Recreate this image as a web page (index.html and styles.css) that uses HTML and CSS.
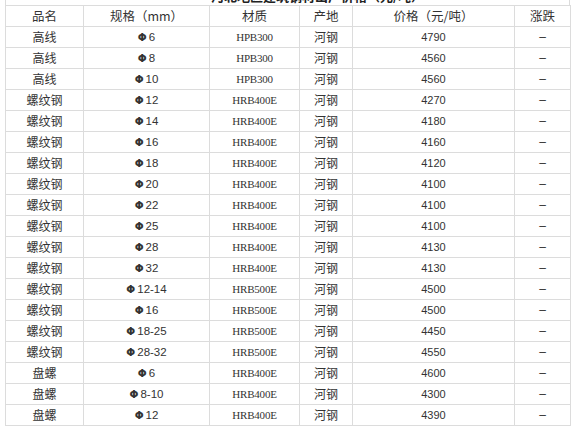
FILE: index.html
```html
<!DOCTYPE html>
<html lang="zh-CN">
<head>
<meta charset="utf-8">
<title>钢材价格</title>
<link rel="stylesheet" href="styles.css">
</head>
<body>
<div class="sheet">
  <div class="title-strip"><span class="title">河北地区建筑钢材出厂价格（元/吨）</span></div>
  <table class="prices">
    <colgroup>
      <col class="c-name"><col class="c-spec"><col class="c-mat"><col class="c-orig"><col class="c-price"><col class="c-chg">
    </colgroup>
    <thead>
      <tr><th>品名</th><th>规格（mm）</th><th>材质</th><th>产地</th><th>价格（元/吨）</th><th>涨跌</th></tr>
    </thead>
    <tbody>
      <tr><td>高线</td><td class="spec"><span class="phi">Φ</span>6</td><td class="mat">HPB300</td><td>河钢</td><td class="num">4790</td><td class="chg">–</td></tr>
      <tr><td>高线</td><td class="spec"><span class="phi">Φ</span>8</td><td class="mat">HPB300</td><td>河钢</td><td class="num">4560</td><td class="chg">–</td></tr>
      <tr><td>高线</td><td class="spec"><span class="phi">Φ</span>10</td><td class="mat">HPB300</td><td>河钢</td><td class="num">4560</td><td class="chg">–</td></tr>
      <tr><td>螺纹钢</td><td class="spec"><span class="phi">Φ</span>12</td><td class="mat">HRB400E</td><td>河钢</td><td class="num">4270</td><td class="chg">–</td></tr>
      <tr><td>螺纹钢</td><td class="spec"><span class="phi">Φ</span>14</td><td class="mat">HRB400E</td><td>河钢</td><td class="num">4180</td><td class="chg">–</td></tr>
      <tr><td>螺纹钢</td><td class="spec"><span class="phi">Φ</span>16</td><td class="mat">HRB400E</td><td>河钢</td><td class="num">4160</td><td class="chg">–</td></tr>
      <tr><td>螺纹钢</td><td class="spec"><span class="phi">Φ</span>18</td><td class="mat">HRB400E</td><td>河钢</td><td class="num">4120</td><td class="chg">–</td></tr>
      <tr><td>螺纹钢</td><td class="spec"><span class="phi">Φ</span>20</td><td class="mat">HRB400E</td><td>河钢</td><td class="num">4100</td><td class="chg">–</td></tr>
      <tr><td>螺纹钢</td><td class="spec"><span class="phi">Φ</span>22</td><td class="mat">HRB400E</td><td>河钢</td><td class="num">4100</td><td class="chg">–</td></tr>
      <tr><td>螺纹钢</td><td class="spec"><span class="phi">Φ</span>25</td><td class="mat">HRB400E</td><td>河钢</td><td class="num">4100</td><td class="chg">–</td></tr>
      <tr><td>螺纹钢</td><td class="spec"><span class="phi">Φ</span>28</td><td class="mat">HRB400E</td><td>河钢</td><td class="num">4130</td><td class="chg">–</td></tr>
      <tr><td>螺纹钢</td><td class="spec"><span class="phi">Φ</span>32</td><td class="mat">HRB400E</td><td>河钢</td><td class="num">4130</td><td class="chg">–</td></tr>
      <tr><td>螺纹钢</td><td class="spec"><span class="phi">Φ</span>12-14</td><td class="mat">HRB500E</td><td>河钢</td><td class="num">4500</td><td class="chg">–</td></tr>
      <tr><td>螺纹钢</td><td class="spec"><span class="phi">Φ</span>16</td><td class="mat">HRB500E</td><td>河钢</td><td class="num">4500</td><td class="chg">–</td></tr>
      <tr><td>螺纹钢</td><td class="spec"><span class="phi">Φ</span>18-25</td><td class="mat">HRB500E</td><td>河钢</td><td class="num">4450</td><td class="chg">–</td></tr>
      <tr><td>螺纹钢</td><td class="spec"><span class="phi">Φ</span>28-32</td><td class="mat">HRB500E</td><td>河钢</td><td class="num">4550</td><td class="chg">–</td></tr>
      <tr><td>盘螺</td><td class="spec"><span class="phi">Φ</span>6</td><td class="mat">HRB400E</td><td>河钢</td><td class="num">4600</td><td class="chg">–</td></tr>
      <tr><td>盘螺</td><td class="spec"><span class="phi">Φ</span>8-10</td><td class="mat">HRB400E</td><td>河钢</td><td class="num">4300</td><td class="chg">–</td></tr>
      <tr><td>盘螺</td><td class="spec"><span class="phi">Φ</span>12</td><td class="mat">HRB400E</td><td>河钢</td><td class="num">4390</td><td class="chg">–</td></tr>
    </tbody>
  </table>
</div>
</body>
</html>
```

FILE: styles.css
```css
html, body {
  margin: 0;
  padding: 0;
  background: #fff;
}

body {
  font-family: "Noto Sans CJK SC", "Liberation Sans", sans-serif;
  font-size: 12px;
  color: #333;
}

.sheet {
  padding-left: 5px;
  width: 565px;
}

.title-strip {
  height: 5px;
  overflow: hidden;
  display: flex;
  align-items: flex-end;
  justify-content: center;
  border-left: 1px solid #dcdcdc;
  border-right: 1px solid #dcdcdc;
  box-sizing: border-box;
  padding-left: 60px;
}

.title {
  font-size: 13px;
  font-weight: bold;
  line-height: 16px;
  color: #222;
  white-space: nowrap;
  margin-bottom: 1px;
}

.prices {
  border-collapse: collapse;
  table-layout: fixed;
  width: 565px;
}

.c-name { width: 78px; }
.c-spec { width: 126px; }
.c-mat { width: 90px; }
.c-orig { width: 53px; }
.c-price { width: 162px; }
.c-chg { width: 56px; }

.prices th,
.prices td {
  border: 1px solid #dcdcdc;
  height: 20px;
  padding: 0;
  text-align: center;
  vertical-align: middle;
  font-weight: normal;
  line-height: 14px;
  white-space: nowrap;
}

.prices th {
  font-size: 12.5px;
}

.spec {
  font-family: "Liberation Sans", sans-serif;
  font-size: 11.5px;
}

.phi {
  font-family: "DejaVu Sans", sans-serif;
  font-weight: bold;
  font-size: 10.5px;
  margin-right: 2px;
}

.mat {
  font-family: "Liberation Serif", serif;
  font-size: 11px;
  letter-spacing: -0.2px;
}

.num {
  font-family: "Liberation Sans", sans-serif;
  font-size: 11px;
}

.chg {
  font-family: "Liberation Sans", sans-serif;
  font-size: 12px;
}
```
